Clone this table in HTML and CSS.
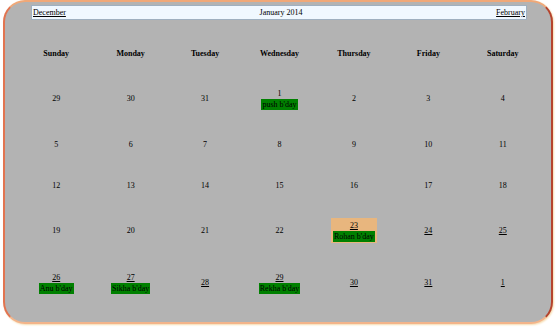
FILE: index.html
```html
<!DOCTYPE html>
<html>
<head>
<meta charset="utf-8">
<link rel="stylesheet" href="styles.css">
</head>
<body>
<div class="cal">
  <div class="nav">
    <a class="navlink" href="#">December</a>
    <span class="title">January 2014</span>
    <a class="navlink" href="#">February</a>
  </div>
  <div class="grid">
    <div class="hd">Sunday</div><div class="hd">Monday</div><div class="hd">Tuesday</div><div class="hd">Wednesday</div><div class="hd">Thursday</div><div class="hd">Friday</div><div class="hd">Saturday</div>

    <div class="day">29</div><div class="day">30</div><div class="day">31</div>
    <div class="day"><span>1</span><span class="ev">push b'day</span></div>
    <div class="day">2</div><div class="day">3</div><div class="day">4</div>

    <div class="day">5</div><div class="day">6</div><div class="day">7</div><div class="day">8</div><div class="day">9</div><div class="day">10</div><div class="day">11</div>

    <div class="day">12</div><div class="day">13</div><div class="day">14</div><div class="day">15</div><div class="day">16</div><div class="day">17</div><div class="day">18</div>

    <div class="day">19</div><div class="day">20</div><div class="day">21</div><div class="day">22</div>
    <div class="day"><div class="today"><a href="#">23</a><span class="ev">Rohan b'day</span></div></div>
    <div class="day"><a href="#">24</a></div><div class="day"><a href="#">25</a></div>

    <div class="day"><a href="#">26</a><span class="ev">Anu b'day</span></div>
    <div class="day"><a href="#">27</a><span class="ev">Sikha b'day</span></div>
    <div class="day"><a href="#">28</a></div>
    <div class="day"><a href="#">29</a><span class="ev">Rekha b'day</span></div>
    <div class="day"><a href="#">30</a></div><div class="day"><a href="#">31</a></div><div class="day"><a href="#">1</a></div>
  </div>
</div>
</body>
</html>
```
FILE: styles.css
```css
html, body {
  margin: 0;
  padding: 0;
  background: #ffffff;
}
body {
  width: 557px;
  height: 328px;
  font-family: "Liberation Serif", "Times New Roman", serif;
  font-size: 8px;
  color: #000;
}
a { color: #000; text-decoration: underline; }
.cal {
  margin: 0 4px 0 3px;
  height: 320px;
  box-sizing: content-box;
  background: #b3b3b3;
  border: 2px solid;
  border-color: #f0a878 #b5432c #f3b48a #e27450;
  border-radius: 22px;
  box-shadow: 1px 1px 2px #f6dcb0;
}
.nav {
  margin: 3px 24px 0 26px;
  height: 13px;
  background: #f0f8ff;
  border: 1px solid #9fb0c0;
  display: flex;
  align-items: center;
  justify-content: space-between;
  padding: 0 1px;
  line-height: 13px;
}
.grid {
  margin: 11px 0 0 14px;
  width: 521px;
  display: grid;
  grid-template-columns: repeat(7, 1fr);
  grid-template-rows: 45px 46px 46px 36px 53px 52px;
}
.hd {
  font-weight: bold;
  display: flex;
  align-items: center;
  justify-content: center;
}
.day {
  display: flex;
  flex-direction: column;
  align-items: center;
  justify-content: center;
  line-height: 10px;
}
.ev {
  background: #008000;
  color: #000;
  padding: 0 1px;
  line-height: 11px;
}
.today {
  background: #e8b67e;
  padding: 3px 2px 1px;
  display: flex;
  flex-direction: column;
  align-items: center;
}
```
